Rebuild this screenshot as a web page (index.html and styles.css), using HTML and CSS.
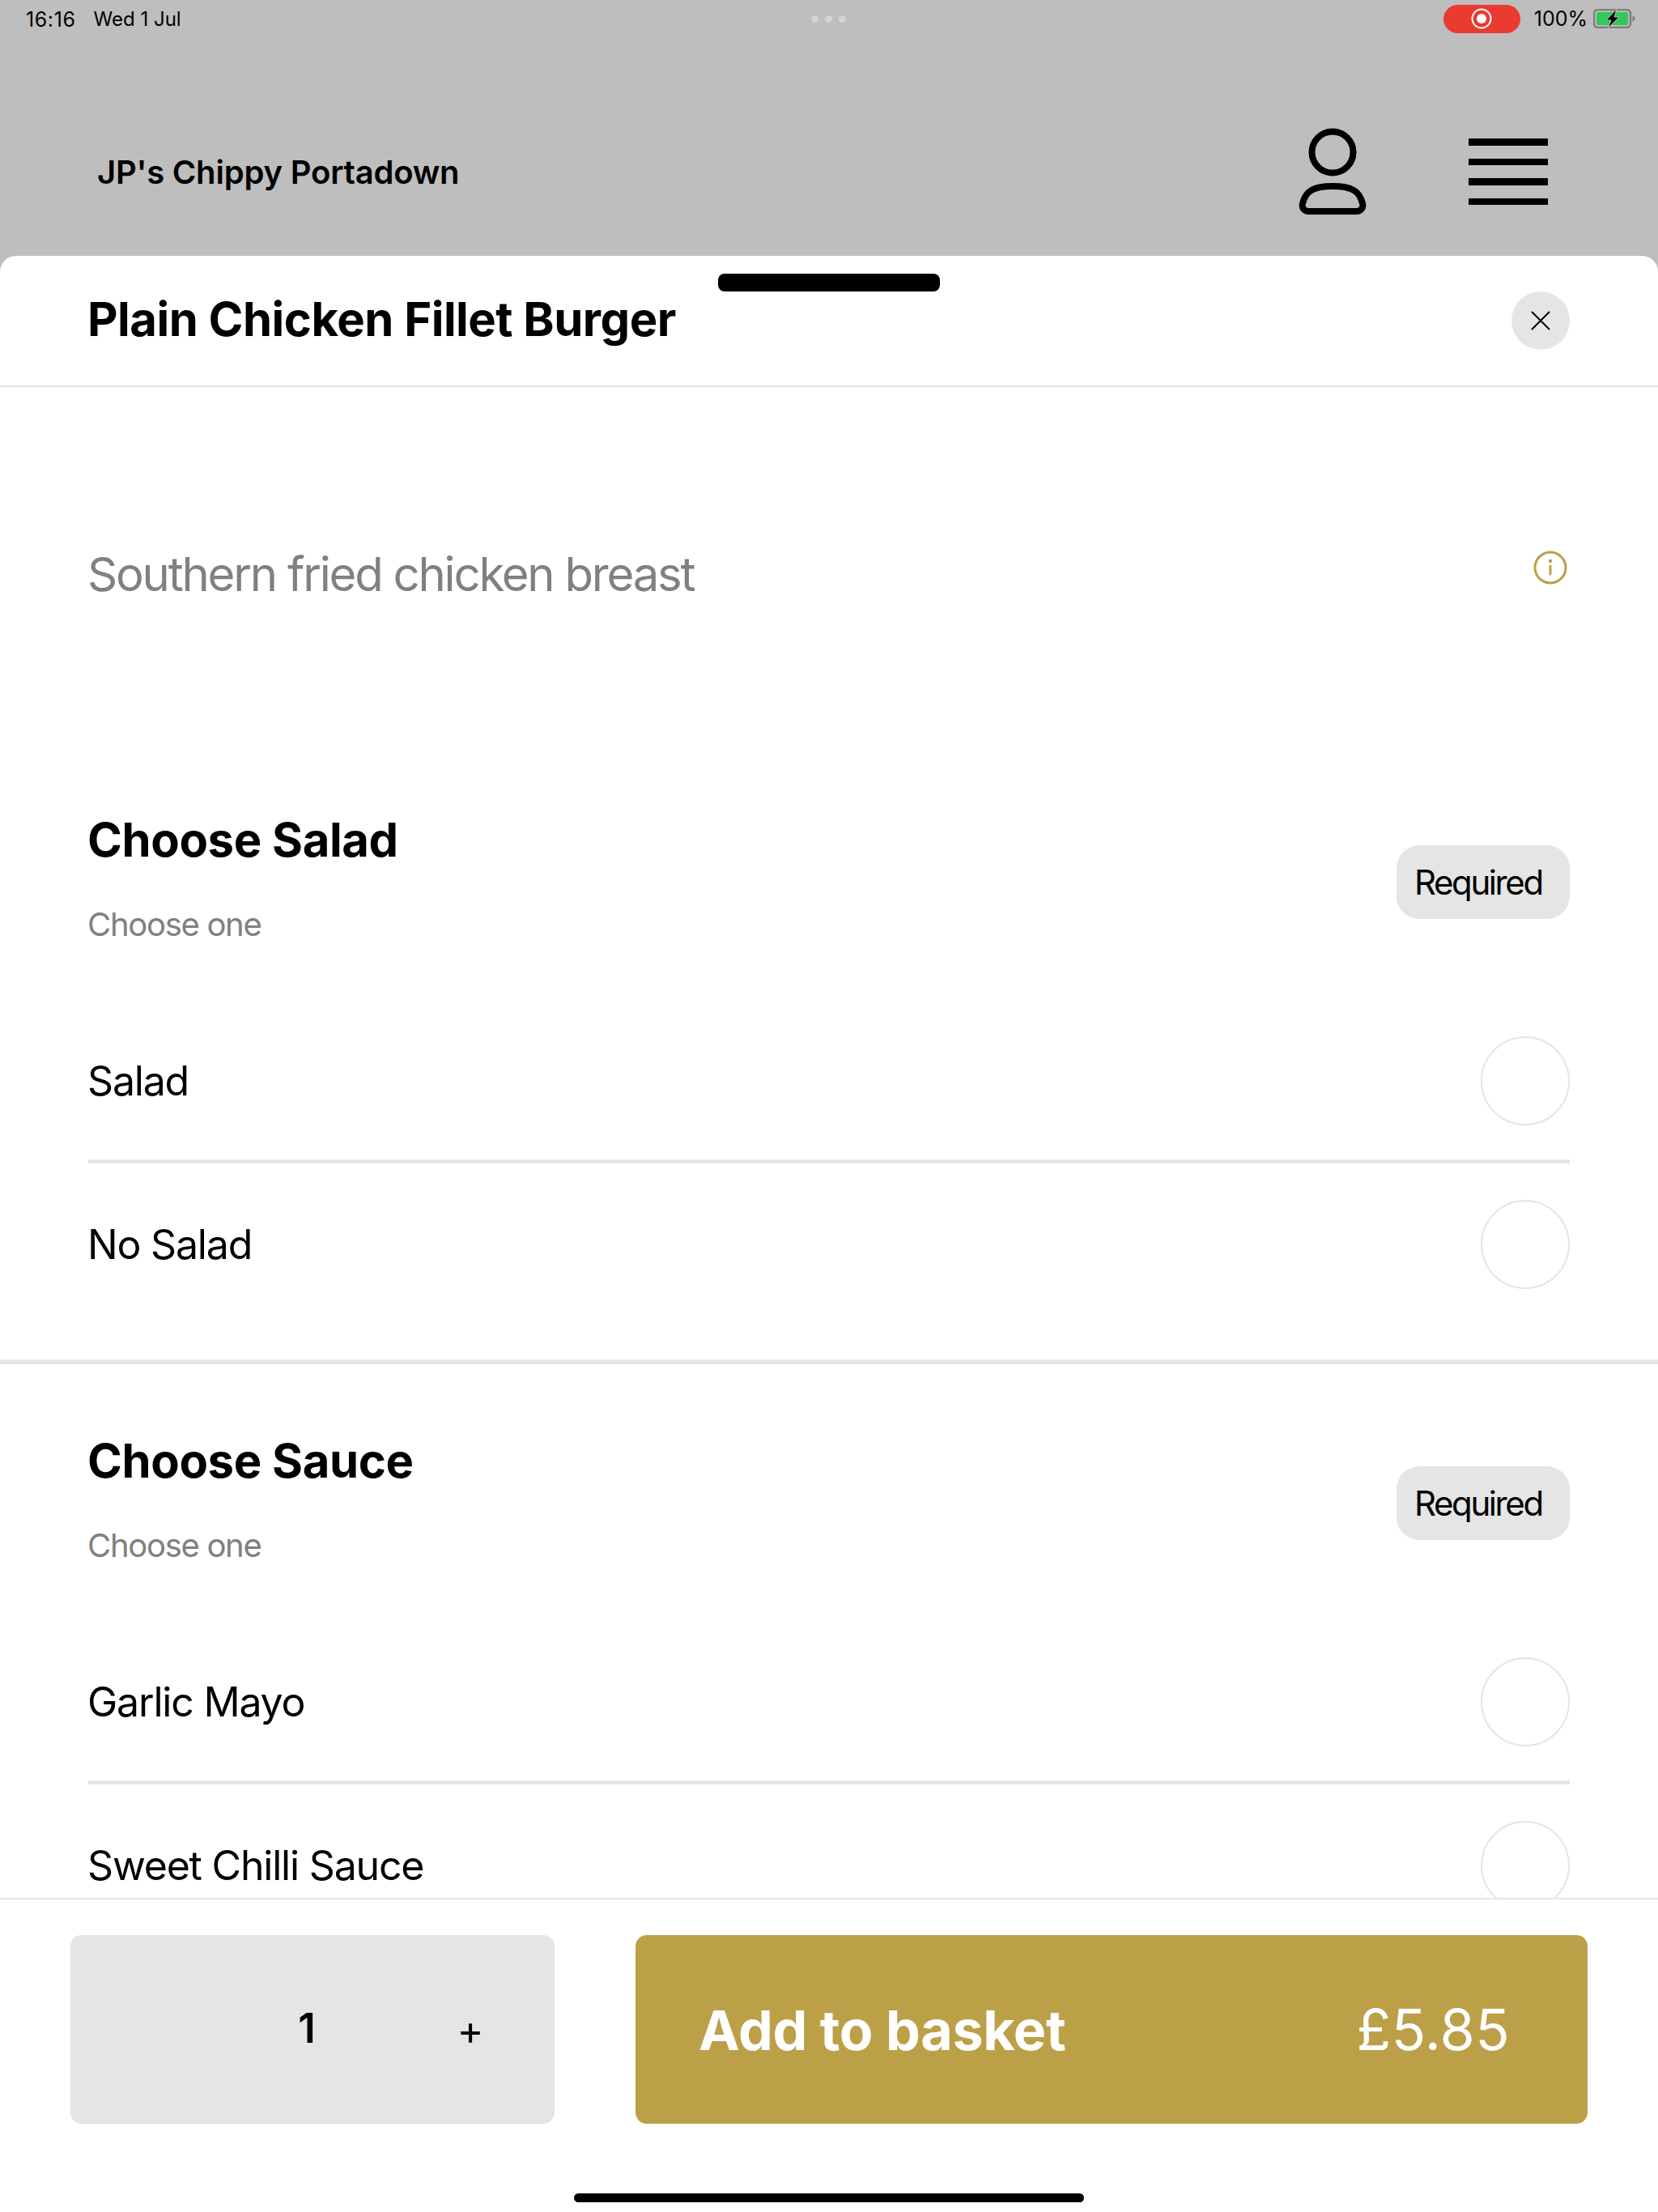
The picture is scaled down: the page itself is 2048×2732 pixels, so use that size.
FILE: index.html
```html
<!DOCTYPE html>
<html lang="en">
<head>
    <meta charset="UTF-8">
    <meta name="viewport" content="width=device-width, initial-scale=1.0">
    <title>Plain Chicken Fillet Burger</title>
    <link rel="stylesheet" href="styles.css">
</head>
<body>
    <div class="wrapper_one">

        <div class="status_bar">
            <div class="status_left">
                <span class="status_time">16:16</span>
                <span>Wed 1 Jul</span>
            </div>
            <div class="status_dots"><i></i><i></i><i></i></div>
            <div class="status_right">
                <div class="record_pill">
                    <svg width="26" height="26" viewBox="0 0 26 26">
                        <circle cx="13" cy="13" r="11.5" fill="none" stroke="#fff" stroke-width="2"/>
                        <circle cx="13" cy="13" r="6" fill="#fff"/>
                    </svg>
                </div>
                <span class="battery_text">100%</span>
                <svg class="battery_icon" width="52" height="24" viewBox="0 0 52 24">
                    <rect x="1" y="1" width="45" height="22" rx="5" fill="none" stroke="#7d7d7d" stroke-width="2.500"/>
                    <rect x="4" y="4" width="39" height="16" rx="2.500" fill="#34c759"/>
                    <path d="M48.500 8.500c2 .6 3 1.800 3 3.500s-1 2.900-3 3.500z" fill="#7d7d7d"/>
                    <path d="M29 0 16 14h6l-4 10 14-14h-6z" fill="#000" stroke="#bebebe" stroke-width="1"/>
                </svg>
            </div>
        </div>

        <div class="top_bar">
            <h1 class="shop_name">JP's Chippy Portadown</h1>
            <svg class="user_icon" width="84" height="108" viewBox="0 0 84 108">
                <circle cx="42" cy="30" r="25.500" fill="none" stroke="#000" stroke-width="8"/>
                <path d="M42 72c-24 0-33 6-37 21-1.500 6 2 10 8 10h58c6 0 9.500-4 8-10-4-15-13-21-37-21z" fill="none" stroke="#000" stroke-width="8"/>
            </svg>
            <div class="menu_icon"><i></i><i></i><i></i><i></i></div>
        </div>

        <div class="sheet">
            <div class="sheet_handle"></div>

            <div class="sheet_head">
                <h2 class="item_title">Plain Chicken Fillet Burger</h2>
                <button class="close_btn">
                    <svg width="24" height="24" viewBox="0 0 24 24">
                        <path d="M1 1 23 23M23 1 1 23" stroke="#000" stroke-width="2" fill="none"/>
                    </svg>
                </button>
            </div>

            <div class="sheet_scroll">
                <div class="item_desc">
                    <p>Southern fried chicken breast</p>
                    <svg class="info_icon" width="42" height="42" viewBox="0 0 42 42">
                        <circle cx="21" cy="21" r="19" fill="none" stroke="#bca048" stroke-width="3"/>
                        <circle cx="21" cy="13" r="2.200" fill="#bca048"/>
                        <path d="M21 19v10" stroke="#bca048" stroke-width="3" stroke-linecap="round"/>
                    </svg>
                </div>

                <section class="option_group">
                    <div class="group_head">
                        <div>
                            <h3>Choose Salad</h3>
                            <p>Choose one</p>
                        </div>
                        <span class="required_tag">Required</span>
                    </div>
                    <div class="option_row"><span>Salad</span><i class="radio"></i></div>
                    <div class="option_row"><span>No Salad</span><i class="radio"></i></div>
                </section>

                <section class="option_group">
                    <div class="group_head">
                        <div>
                            <h3>Choose Sauce</h3>
                            <p>Choose one</p>
                        </div>
                        <span class="required_tag">Required</span>
                    </div>
                    <div class="option_row"><span>Garlic Mayo</span><i class="radio"></i></div>
                    <div class="option_row"><span>Sweet Chilli Sauce</span><i class="radio"></i></div>
                </section>
            </div>

            <div class="sheet_foot">
                <div class="foot_btns">
                    <div class="qty_box">
                        <span></span>
                        <span class="qty_num">1</span>
                        <span class="qty_plus">+</span>
                    </div>
                    <button class="add_btn">
                        <span class="add_label">Add to basket</span>
                        <span class="add_price">£5.85</span>
                    </button>
                </div>
                <div class="home_bar"></div>
            </div>
        </div>

    </div>
</body>
</html>
```

FILE: styles.css
```css
* {
    margin: 0;
    padding: 0;
    box-sizing: border-box;
}

body {
    font-family: Inter, "Liberation Sans", sans-serif;
    color: #000;
}

.wrapper_one {
    width: 2048px;
    height: 2732px;
    display: flex;
    flex-direction: column;
    overflow: hidden;
    background-color: #bebebe;
}

/* status bar */
.status_bar {
    height: 46px;
    display: flex;
    justify-content: space-between;
    align-items: center;
    padding: 0 28px 0 32px;
    font-size: 24px;
    position: relative;
}

.status_left {
    display: flex;
    gap: 22px;
    padding-top: 2px;
}

.status_time {
    font-size: 25px;
    letter-spacing: 0.6px;
}

.status_dots {
    position: absolute;
    left: 1002px;
    top: 19px;
    display: flex;
    gap: 8px;
}

.status_dots i {
    width: 9px;
    height: 9px;
    border-radius: 50%;
    background-color: #d4d4d4;
}

.status_right {
    display: flex;
    align-items: center;
}

.record_pill {
    width: 95px;
    height: 35px;
    border-radius: 18px;
    background-color: #eb3a30;
    display: flex;
    align-items: center;
    justify-content: center;
}

.battery_text {
    margin-left: 17px;
    font-size: 25px;
}

.battery_icon {
    margin-left: 7px;
}

/* page header behind the sheet */
.top_bar {
    height: 270px;
    padding: 62px 136px 0 120px;
    display: flex;
    align-items: center;
}

.shop_name {
    font-size: 40px;
    font-weight: 600;
    letter-spacing: -0.2px;
    margin-right: auto;
}

.menu_icon {
    width: 98px;
    margin-left: 126px;
    display: flex;
    flex-direction: column;
    gap: 16px;
}

.menu_icon i {
    display: block;
    height: 8.5px;
    background-color: #000;
}

/* sheet */
.sheet {
    flex: 1;
    min-height: 0;
    position: relative;
    display: flex;
    flex-direction: column;
    background-color: #fff;
    border-radius: 20px 20px 0 0;
}

.sheet_handle {
    position: absolute;
    left: 887px;
    top: 22px;
    width: 274px;
    height: 22px;
    border-radius: 8px;
    background-color: #000;
}

.sheet_head {
    height: 162px;
    flex-shrink: 0;
    padding: 0 109px 0 108px;
    display: flex;
    justify-content: space-between;
    align-items: center;
    border-bottom: 2px solid #e5e5e5;
}

.item_title {
    font-size: 58px;
    font-weight: 700;
    letter-spacing: -0.5px;
    margin-bottom: 4px;
}

.close_btn {
    width: 72px;
    height: 72px;
    border: none;
    border-radius: 50%;
    background-color: #e5e5e5;
    display: flex;
    align-items: center;
    justify-content: center;
}

.sheet_scroll {
    flex: 1;
    min-height: 0;
    overflow: hidden;
}

.item_desc {
    height: 440px;
    padding: 0 109px 0 108px;
    display: flex;
    justify-content: space-between;
    align-items: center;
    color: #808080;
    font-size: 58px;
    letter-spacing: -2.2px;
}

.item_desc p {
    padding-top: 22px;
}

.info_icon {
    margin-right: 3px;
    margin-top: 6px;
}

.option_group {
    height: 767px;
    padding: 0 109px;
    position: relative;
}

.option_group:first-of-type::after {
    content: "";
    position: absolute;
    left: 0;
    right: 0;
    bottom: 0;
    height: 6px;
    background-color: #e5e5e5;
}

.group_head {
    height: 317px;
    padding-top: 26px;
    display: flex;
    justify-content: space-between;
    align-items: center;
}

.group_head h3 {
    font-size: 58px;
    font-weight: 700;
    letter-spacing: -0.4px;
    line-height: 80px;
    margin-left: -1px;
}

.group_head p {
    font-size: 40px;
    letter-spacing: -1.3px;
    line-height: 80px;
    margin-top: 25px;
    margin-left: -1px;
    color: #808080;
}

.required_tag {
    width: 214px;
    height: 91px;
    border-radius: 28px;
    background-color: #e5e5e5;
    font-size: 42px;
    letter-spacing: -2.4px;
    padding-left: 22px;
    display: flex;
    align-items: center;
}

.option_row {
    height: 202px;
    padding-top: 3px;
    display: flex;
    justify-content: space-between;
    align-items: center;
    font-size: 50px;
    letter-spacing: -1.2px;
    border-bottom: 5px solid #e5e5e5;
}

.option_row span {
    margin-left: -1px;
}

.option_row:last-child {
    height: 199px;
    padding-top: 0;
    border-bottom: none;
}

.radio {
    width: 110px;
    height: 110px;
    border: 2px solid #e5e5e5;
    border-radius: 50%;
}

/* footer */
.sheet_foot {
    height: 388px;
    flex-shrink: 0;
    background-color: #fff;
    border-top: 2px solid #e5e5e5;
    padding: 44px 87px 0;
}

.foot_btns {
    display: flex;
    gap: 100px;
}

.qty_box {
    width: 598px;
    height: 233px;
    border-radius: 14px;
    background-color: #e5e5e5;
    display: grid;
    grid-template-columns: 194px 196px 208px;
    align-items: center;
    justify-items: center;
}

.qty_num {
    font-size: 51px;
    font-weight: 600;
    padding-bottom: 4px;
}

.qty_plus {
    font-size: 50px;
}

.add_btn {
    flex: 1;
    height: 233px;
    border: none;
    border-radius: 14px;
    background-color: #bca048;
    color: #fff;
    font-family: inherit;
    padding: 0 96px 0 78px;
    display: flex;
    justify-content: space-between;
    align-items: center;
}

.add_label {
    font-size: 68px;
    font-weight: 700;
    letter-spacing: -0.3px;
}

.add_price {
    font-size: 70px;
    font-weight: 400;
    letter-spacing: 0.3px;
}

.home_bar {
    width: 630px;
    height: 11px;
    border-radius: 6px;
    background-color: #000;
    margin: 86px auto 0;
}
```
